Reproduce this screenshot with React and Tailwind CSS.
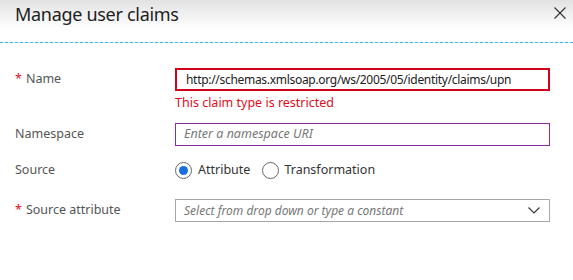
export default function App() {
  const font = { fontFamily: '"Segoe UI", "Noto Sans", "Open Sans", sans-serif' };
  return (
    <div className="w-[573px] h-[280px] bg-white overflow-hidden" style={font}>
      <div className="h-[43px] bg-gradient-to-b from-[#e2e2e2] to-white to-[70%] border-b border-dashed border-[#2ebdf0] flex items-start justify-between pl-[15px] pr-[7px]">
        <div className="text-[18px] tracking-[-0.3px] leading-[26px] text-[#1e1e1e] mt-[1px]">Manage user claims</div>
        <svg width="12" height="12" viewBox="0 0 12 12" className="mt-[7px]">
          <path d="M0.5 0.5 L11.5 11.5 M11.5 0.5 L0.5 11.5" stroke="#333" strokeWidth="1.1" fill="none" />
        </svg>
      </div>
      <div className="pl-[15px] pr-[23px] pt-[25px] text-[12.5px] text-[#555]">
        <div className="flex items-start">
          <div className="w-[160px] shrink-0 h-[23px] flex items-center">
            <span className="text-[#e00b1c] mr-[4px]">*</span>
            <span>Name</span>
          </div>
          <div className="flex-1 min-w-0">
            <div className="h-[23px] border-2 border-[#d0021b] flex items-center pl-[9px] text-[12px] tracking-[-0.3px] text-[#222] whitespace-nowrap overflow-hidden">
              http://schemas.xmlsoap.org/ws/2005/05/identity/claims/upn
            </div>
            <div className="mt-[3px] leading-[17px] text-[#e00b1c]">This claim type is restricted</div>
          </div>
        </div>
        <div className="flex items-start mt-[12px]">
          <div className="w-[160px] shrink-0 h-[23px] flex items-center">Namespace</div>
          <div className="flex-1 h-[23px] border border-[#8a2da5] flex items-center pl-[8px] italic text-[12.5px] text-[#777]">
            Enter a namespace URI
          </div>
        </div>
        <div className="flex items-center mt-[16px] h-[17px]">
          <div className="w-[160px] shrink-0">Source</div>
          <div className="flex items-center">
            <div className="w-[17px] h-[17px] rounded-full border border-[#666] flex items-center justify-center">
              <div className="w-[9px] h-[9px] rounded-full bg-[#1a6fe0]" />
            </div>
            <span className="ml-[6px] text-[#333]">Attribute</span>
            <div className="ml-[12px] w-[17px] h-[17px] rounded-full border border-[#666]" />
            <span className="ml-[5px] text-[#333]">Transformation</span>
          </div>
        </div>
        <div className="flex items-start mt-[20px]">
          <div className="w-[160px] shrink-0 h-[23px] flex items-center">
            <span className="text-[#e00b1c] mr-[4px]">*</span>
            <span>Source attribute</span>
          </div>
          <div className="flex-1 h-[23px] border border-[#a6a6a6] flex items-center justify-between pl-[8px] pr-[9px] italic text-[12px] text-[#777]">
            <span>Select from drop down or type a constant</span>
            <svg width="12" height="7" viewBox="0 0 12 7">
              <path d="M0.5 0.5 L6 6 L11.5 0.5" stroke="#333" strokeWidth="1.1" fill="none" />
            </svg>
          </div>
        </div>
      </div>
    </div>
  );
}
